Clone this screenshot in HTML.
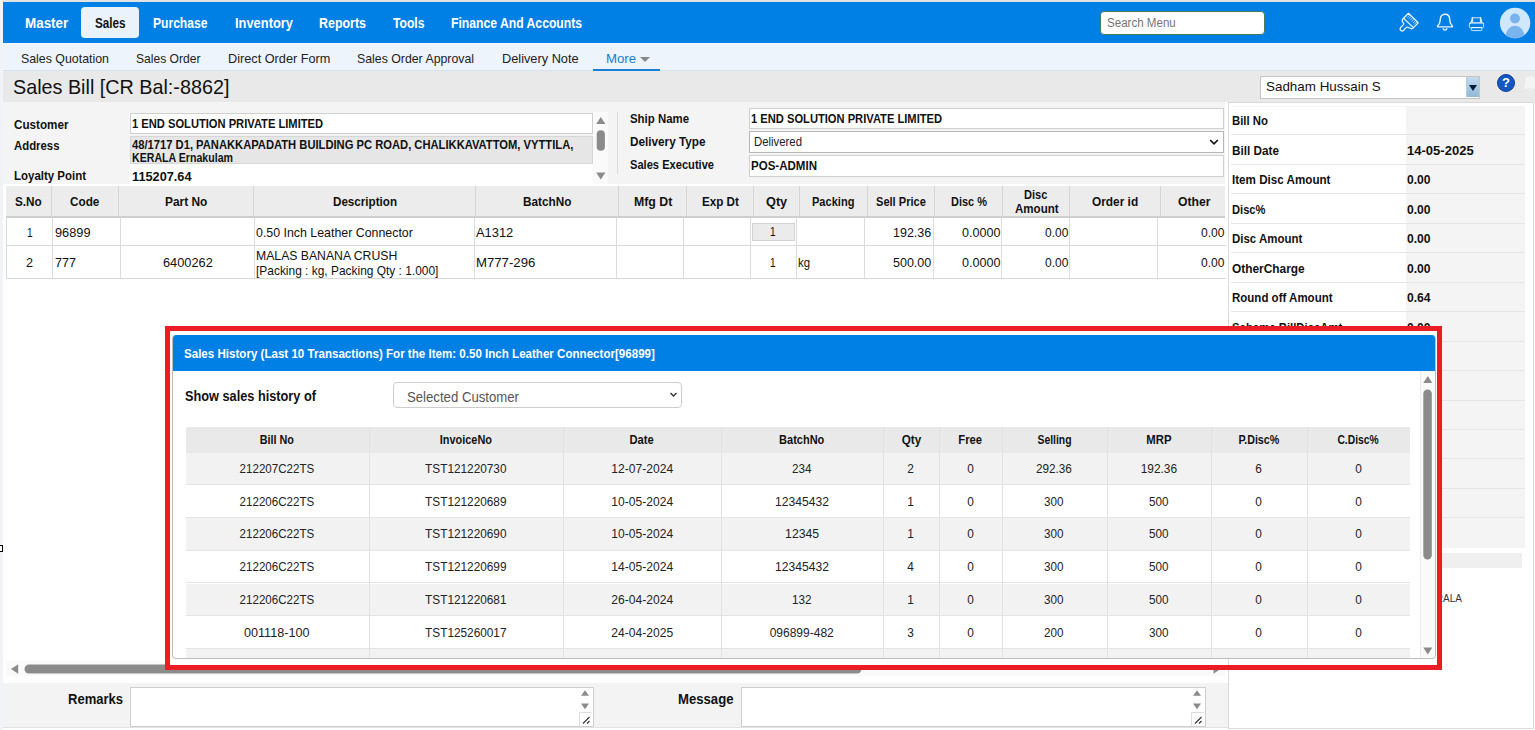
<!DOCTYPE html>
<html lang="en"><head>
<meta charset="utf-8">
<title>Sales Bill</title>
<style>
*{box-sizing:border-box;margin:0;padding:0}
html,body{width:1535px;height:730px;overflow:hidden;background:#fff}
body{position:relative;font-family:"Liberation Sans",sans-serif;color:#111;font-size:13px}
.abs{position:absolute}
.t{position:absolute;white-space:nowrap;line-height:20px;height:20px;margin-top:-10px}
.b{font-weight:bold}
#edgeL{left:0;top:0;width:3px;height:730px;background:#f1f3f9;z-index:50}
#edgeT{left:3px;top:0;width:1532px;height:2px;background:#e3e3e3;z-index:50}
/* top nav */
#nav{left:0;top:2px;width:1535px;height:41px;background:#0080e5}
#nav .mi{position:absolute;top:0;height:41px;line-height:43px;color:#fff;font-weight:bold;font-size:14px;white-space:nowrap}
#nav .pill{position:absolute;left:81px;top:5px;width:58px;height:31px;background:#eaf3fc;border-radius:4px}
#nav .mi.on{color:#111}
#search{position:absolute;left:1100px;top:8.6px;width:164.5px;height:24.4px;background:#fff;border:1px solid #4a7a5a;border-radius:4px;color:#757575;font-size:12.5px;line-height:22px;padding-left:5.5px}
/* sub nav */
#sub{left:0;top:43px;width:1535px;height:28px;background:#edf4fb;border-bottom:1px solid #d5e3f0;border-top:1px solid #f6fafe}
#sub .si{position:absolute;top:-1px;height:28px;line-height:32px;font-size:13px;color:#222;white-space:nowrap}
#sub .more{color:#1a7fd6}
#sub .ul{position:absolute;left:593px;top:25px;width:67px;height:2px;background:#1a7fd6}
#sub .caret{position:absolute;left:640px;top:13px;width:0;height:0;border-left:5px solid transparent;border-right:5px solid transparent;border-top:5px solid #888}
/* title bar */
#title{left:0;top:71px;width:1535px;height:31px;background:#e9e9e9}
#title h1{position:absolute;left:13px;top:0;height:31px;line-height:31px;font-size:21px;font-weight:normal;color:#111;white-space:nowrap}
#usersel{position:absolute;left:1260px;top:5px;width:220px;height:22.5px;background:#fff;border:1px solid #c5c5c5;font-size:13.5px;line-height:20px;padding-left:5px;color:#111}
#usersel b{position:absolute;right:0;top:0;width:13px;height:20px;background:linear-gradient(#c3dbee,#8fb8d8);border-left:1px solid #b5cde0}
#usersel b:after{content:"";position:absolute;left:2px;top:8px;border-left:4px solid transparent;border-right:4px solid transparent;border-top:6px solid #0a1a3a}
#help{position:absolute;left:1497px;top:3px;width:18px;height:18px;border-radius:50%;background:#1557c0;border:1px solid #0d3f93;color:#fff;font-weight:bold;font-size:13px;line-height:16px;text-align:center}

/* form */
#form{left:0;top:102px;width:1225px;height:82px;background:#f4f4f4}
.inp{position:absolute;background:#fff;border:1px solid #d0d0d0}
.f13{font-size:13px}
/* grid */
table{border-collapse:collapse;table-layout:fixed}
#gh{left:6px;top:186px;width:1219px;height:32px;background:#ececec;border-bottom:2px solid #cfcfcf}
#gh .c{position:absolute;top:0;height:30px;border-left:1px solid #d6d6d6}
#gb .c{position:absolute;border-left:1px solid #dcdcdc}
#gb{left:6px;top:218px;width:1219px;height:61px;border-left:1px solid #dcdcdc}
#gb .r{position:absolute;left:0;width:1219px;border-bottom:1px solid #d8d8d8}

/* right panel */
#rp{left:1228px;top:102px;width:305.5px;height:626.5px;background:#fff;border:1px solid #dadada}
#rpv{left:1231px;top:105.5px;width:293.5px;height:442px;background:#f4f4f4}
#rpl{left:1231px;top:107px;width:175px;height:440.5px;background:#fff}
.rs{position:absolute;left:1231px;width:293.5px;height:1px;background:#e6e6e6}
/* bottom */
#hs{left:6px;top:661px;width:1219px;height:15px;background:#fafafa}
#bot{left:3px;top:683px;width:1225px;height:45px;background:#f3f3f3;border-bottom:1px solid #e2e2e2}
.ta{position:absolute;background:#fff;border:1px solid #cfcfcf}
/* modal */
#red{left:165px;top:326px;width:1277px;height:344px;border:5px solid #ec1c24;background:#fff;z-index:20}
#md{left:172px;top:334.5px;width:1264px;height:324.5px;background:#fff;border:1px solid #bdbdbd;border-top:none;border-radius:4px;z-index:21;overflow:hidden}
#mh{position:absolute;left:0;top:0;width:1264px;height:36px;background:#0080e5}
#md .t{z-index:22}
#msel{position:absolute;left:219.5px;top:47.6px;width:289px;height:26px;border:1px solid #cdcdcd;border-radius:4px;background:#fff}
#mt{position:absolute;left:12.5px;top:92.5px;width:1224px;height:240px}
#mt .hr{position:absolute;left:0;top:0;width:1224px;height:25.7px;background:#e9e9e9}
#mt .r{position:absolute;left:0;width:1224px;height:32.7px;border-bottom:1px solid #e4e4e4}
#mt .r.o{background:#f2f2f2}
#mt .c{position:absolute;top:0;width:1px;height:240px;background:#e2e2e2}
.cc{position:absolute;text-align:center;white-space:nowrap;line-height:20px;height:20px;margin-top:-10px}
#msb{position:absolute;left:1247px;top:36px;width:16px;height:288px;background:#fafafa;border-left:1px solid #ececec}
/*CSS4*/
</style>
</head>
<body>
<div id="edgeL" class="abs"></div>
<div id="edgeT" class="abs"></div>
<div class="abs" style="left:-4px;top:545px;width:7px;height:7px;border:1px solid #000;background:#fff;z-index:60"></div>

<div id="nav" class="abs">
  <div class="pill"></div>
  <span class="mi" style="left: 25px; display: block; transform: scaleX(0.959); transform-origin: left center;">Master</span>
  <span class="mi on" style="left: 95px; display: block; transform: scaleX(0.836); transform-origin: left center;">Sales</span>
  <span class="mi" style="left: 153px; display: block; transform: scaleX(0.863); transform-origin: left center;">Purchase</span>
  <span class="mi" style="left: 234.5px; display: block; transform: scaleX(0.92); transform-origin: left center;">Inventory</span>
  <span class="mi" style="left: 319px; display: block; transform: scaleX(0.888); transform-origin: left center;">Reports</span>
  <span class="mi" style="left: 392.5px; display: block; transform: scaleX(0.868); transform-origin: left center;">Tools</span>
  <span class="mi" style="left: 451px; display: block; transform: scaleX(0.87); transform-origin: left center;">Finance And Accounts</span>
  <div id="search"><span style="display: inline-block; transform: scaleX(0.925); transform-origin: left center;">Search Menu</span></div>
  <svg class="abs" style="left:1395px;top:0" width="140" height="41" viewBox="1395 2 140 41" fill="none" stroke="#fff" stroke-width="1.25" stroke-linejoin="round" stroke-linecap="round">
<path d="M1408.4 13.3 L1418.2 22.8 L1413.3 27.9 Q1412 29.2 1410.6 28.5 L1408.2 27.3 Q1406.9 26.7 1406 27.7 L1403.7 30.3 A2.1 2.1 0 0 1 1400.5 27.6 L1403.3 24.9 Q1404.2 24 1403.5 23.1 Q1401.5 21 1402.6 19.3 Z" stroke-opacity=".92"></path>
<path d="M1403.8 18.5 L1413.4 27.5" stroke-opacity=".85"></path>
<path d="M1409.4 15.4 L1407.5 17.3 M1410.8 16.8 L1408.9 18.7 M1412.2 18.2 L1410.3 20.1 M1413.7 19.6 L1411.8 21.5 M1415.1 20.9 L1413.2 22.9 M1416.4 22.2 L1414.5 24.1" stroke-width=".9" stroke-opacity=".75"></path>
<path d="M1438.3 26.9 Q1437 26.9 1437.8 25.8 C1439.7 23.6 1440.3 22.5 1440.3 19.4 C1440.3 16 1442.4 14.2 1445 14.2 C1447.6 14.2 1449.7 16 1449.7 19.4 C1449.7 22.5 1450.3 23.6 1452.2 25.8 Q1453 26.9 1451.7 26.9 Z" stroke-width="1.4" stroke-opacity=".92"></path>
<path d="M1443.2 28.7 A1.9 1.9 0 0 0 1446.8 28.7" stroke-width="1.3" stroke-opacity=".9"></path>
<g stroke-width="1" stroke-opacity=".8">
<path d="M1471.9 17.3 H1473.1 V22.2 H1470.6 Z M1481.1 17.3 H1479.9 V22.2 H1482.4 Z" fill="#fff" fill-opacity=".85" stroke="none"></path>
<path d="M1472.2 17.8 H1480.8"></path>
<rect x="1469.3" y="22.7" width="14.3" height="5" rx="1.2"></rect>
<path d="M1469.8 23.3 H1483.1" stroke-opacity=".55"></path>
<rect x="1471.2" y="27.5" width="10.7" height="3.1" rx="1.2"></rect>
</g>
<circle cx="1515.1" cy="23" r="15.2" fill="#d0e8fd" stroke="none"></circle>
<clipPath id="av"><circle cx="1515.1" cy="23" r="15.2"></circle></clipPath>
<g clip-path="url(#av)" fill="#7ab4ee" stroke="none"><circle cx="1515" cy="18.5" r="4.95"></circle><ellipse cx="1515" cy="37.5" rx="9.7" ry="11.7"></ellipse></g>
</svg>
</div>

<div id="sub" class="abs">
  <span class="si" style="left: 21px; display: block; transform: scaleX(0.951); transform-origin: left center;">Sales Quotation</span>
  <span class="si" style="left: 135.5px; display: block; transform: scaleX(0.93); transform-origin: left center;">Sales Order</span>
  <span class="si" style="left: 228px; display: block; transform: scaleX(0.978); transform-origin: left center;">Direct Order Form</span>
  <span class="si" style="left: 357px; display: block; transform: scaleX(0.947); transform-origin: left center;">Sales Order Approval</span>
  <span class="si" style="left: 502.4px; display: block; transform: scaleX(0.982); transform-origin: left center;">Delivery Note</span>
  <span class="si more" style="left: 606.4px; display: block; transform: scaleX(1.013); transform-origin: left center;">More</span>
  <div class="caret"></div>
  <div class="ul"></div>
</div>

<div id="title" class="abs">
  <h1 style="display: block; transform: scaleX(0.941); transform-origin: left center;">Sales Bill [CR Bal:-8862]</h1>
  <div id="usersel"><span style="display: inline-block; transform: scaleX(0.993); transform-origin: left center;">Sadham Hussain S</span><b></b></div>
  <div id="help">?</div>
  <svg class="abs" style="left:1522px;top:4px" width="13" height="18" viewBox="0 0 13 18"><path d="M1 13.5 C3 12 3 9 3.2 6.5 C3.6 2.5 6 1 8.5 1 C11 1 13 2.5 13 6 V13.5 Z M7 15 A1.6 1.6 0 0 0 10 15Z" fill="#f4f4f4"></path></svg>
</div>


<div id="form" class="abs"></div>
<div class="inp" style="left:130px;top:113px;width:463px;height:21px"></div>
<div class="abs" style="left:130px;top:136px;width:463px;height:28px;background:#e6e6e6;border:1px solid #d6d6d6"></div>
<div class="abs" style="left:130px;top:164px;width:478px;height:20px;background:#fff"></div>
<div class="abs" style="left:593px;top:112px;width:15px;height:72px;background:#fafafa"></div>
<svg class="abs" style="left:593px;top:113px" width="15" height="71" viewBox="0 0 15 71"><path d="M3.2 11 L7.8 4 L12.4 11Z M3.2 59.5 L7.8 66.5 L12.4 59.5Z" fill="#8b8b8b"></path><rect x="3.7" y="17.2" width="8.2" height="20.6" rx="4.1" fill="#8b8b8b"></rect></svg>
<div class="abs" style="left:617px;top:112px;width:1px;height:62px;background:#dcdcdc"></div>
<span class="t b f13" style="left: 13.5px; top: 124.5px; display: block; transform: scaleX(0.898); transform-origin: left center;">Customer</span>
<span class="t b f13" style="left: 13.5px; top: 146px; display: block; transform: scaleX(0.874); transform-origin: left center;">Address</span>
<span class="t b f13" style="left: 13.5px; top: 176px; display: block; transform: scaleX(0.882); transform-origin: left center;">Loyalty Point</span>
<span class="t b f13" style="left: 131.5px; top: 124px; display: block; transform: scaleX(0.858); transform-origin: left center;">1 END SOLUTION PRIVATE LIMITED</span>
<span class="t b f13" style="left: 131.5px; top: 144.5px; display: block; transform: scaleX(0.861); transform-origin: left center;">48/1717 D1, PANAKKAPADATH BUILDING PC ROAD, CHALIKKAVATTOM, VYTTILA,</span>
<span class="t b f13" style="left: 131.5px; top: 157.5px; display: block; transform: scaleX(0.816); transform-origin: left center;">KERALA Ernakulam</span>
<span class="t b f13" style="left: 131.5px; top: 176.5px; display: block; transform: scaleX(0.98); transform-origin: left center;">115207.64</span>
<span class="t b f13" style="left: 630px; top: 118.5px; display: block; transform: scaleX(0.878); transform-origin: left center;">Ship Name</span>
<span class="t b f13" style="left: 630px; top: 141.5px; display: block; transform: scaleX(0.903); transform-origin: left center;">Delivery Type</span>
<span class="t b f13" style="left: 630px; top: 165px; display: block; transform: scaleX(0.855); transform-origin: left center;">Sales Executive</span>
<div class="inp" style="left:749px;top:108px;width:475px;height:21px"></div>
<div class="inp" style="left:749px;top:131px;width:475px;height:22px;border-color:#b8b8b8"></div>
<div class="inp" style="left:749px;top:155px;width:475px;height:22px"></div>
<span class="t b f13" style="left: 750.5px; top: 119px; display: block; transform: scaleX(0.858); transform-origin: left center;">1 END SOLUTION PRIVATE LIMITED</span>
<span class="t" style="left: 754px; top: 142px; font-size: 12.5px; color: rgb(34, 34, 34); display: block; transform: scaleX(0.909); transform-origin: left center;">Delivered</span>
<svg class="abs" style="left:1209px;top:138px" width="10" height="8" viewBox="0 0 10 8"><path d="M1.2 2 L5 5.8 L8.8 2" fill="none" stroke="#111" stroke-width="1.7"></path></svg>
<span class="t b f13" style="left: 750.5px; top: 166px; display: block; transform: scaleX(0.887); transform-origin: left center;">POS-ADMIN</span>

<div id="gh" class="abs">
<div class="c" style="left:45px"></div>
<div class="c" style="left:112px"></div>
<div class="c" style="left:247px"></div>
<div class="c" style="left:469px"></div>
<div class="c" style="left:612px"></div>
<div class="c" style="left:680px"></div>
<div class="c" style="left:747px"></div>
<div class="c" style="left:793px"></div>
<div class="c" style="left:861px"></div>
<div class="c" style="left:928px"></div>
<div class="c" style="left:996px"></div>
<div class="c" style="left:1063px"></div>
<div class="c" style="left:1154px"></div>
</div>
<span class="t b f13" style="left: 15.2px; top: 201.5px; display: block; transform: scaleX(0.905); transform-origin: left center;">S.No</span>
<span class="t b f13" style="left: 70.3px; top: 201.5px; display: block; transform: scaleX(0.902); transform-origin: left center;">Code</span>
<span class="t b f13" style="left: 164.6px; top: 201.5px; display: block; transform: scaleX(0.917); transform-origin: left center;">Part No</span>
<span class="t b f13" style="left: 332.5px; top: 201.5px; display: block; transform: scaleX(0.895); transform-origin: left center;">Description</span>
<span class="t b f13" style="left: 522.9px; top: 201.5px; display: block; transform: scaleX(0.905); transform-origin: left center;">BatchNo</span>
<span class="t b f13" style="left: 633.6px; top: 201.5px; display: block; transform: scaleX(0.947); transform-origin: left center;">Mfg Dt</span>
<span class="t b f13" style="left: 701.7px; top: 201.5px; display: block; transform: scaleX(0.896); transform-origin: left center;">Exp Dt</span>
<span class="t b f13" style="left: 766px; top: 201.5px; display: block; transform: scaleX(0.978); transform-origin: left center;">Qty</span>
<span class="t b f13" style="left: 812.3px; top: 201.5px; display: block; transform: scaleX(0.85); transform-origin: left center;">Packing</span>
<span class="t b f13" style="left: 875.8px; top: 201.5px; display: block; transform: scaleX(0.852); transform-origin: left center;">Sell Price</span>
<span class="t b f13" style="left: 950.7px; top: 201.5px; display: block; transform: scaleX(0.842); transform-origin: left center;">Disc %</span>
<span class="t b f13" style="left: 1091.8px; top: 201.5px; display: block; transform: scaleX(0.913); transform-origin: left center;">Order id</span>
<span class="t b f13" style="left: 1177.5px; top: 201.5px; display: block; transform: scaleX(0.937); transform-origin: left center;">Other</span>
<span class="t b f13" style="left: 1024.4px; top: 194.5px; display: block; transform: scaleX(0.852); transform-origin: left center;">Disc</span>
<span class="t b f13" style="left: 1014.6px; top: 209px; display: block; transform: scaleX(0.888); transform-origin: left center;">Amount</span>
<div id="gb" class="abs"><div class="r" style="top:0;height:27.5px"></div><div class="r" style="top:27.5px;height:33px"></div>
<div class="c" style="left:45px;top:0;height:60px"></div>
<div class="c" style="left:113px;top:0;height:60px"></div>
<div class="c" style="left:247px;top:0;height:60px"></div>
<div class="c" style="left:467px;top:0;height:60px"></div>
<div class="c" style="left:609px;top:0;height:60px"></div>
<div class="c" style="left:676px;top:0;height:60px"></div>
<div class="c" style="left:743px;top:0;height:60px"></div>
<div class="c" style="left:789px;top:0;height:60px"></div>
<div class="c" style="left:857px;top:0;height:60px"></div>
<div class="c" style="left:926px;top:0;height:60px"></div>
<div class="c" style="left:994px;top:0;height:60px"></div>
<div class="c" style="left:1062px;top:0;height:60px"></div>
<div class="c" style="left:1150px;top:0;height:60px"></div>
</div>
<div class="abs" style="left:752px;top:223px;width:43px;height:18px;background:#ebebeb;border:1px solid #d2d2d2"></div>
<span class="t f13" style="left: 26.7px; top: 233.3px; display: block; transform: scaleX(0.774); transform-origin: left center;">1</span>
<span class="t f13" style="left: 54.5px; top: 233.3px; display: block; transform: scaleX(0.982); transform-origin: left center;">96899</span>
<span class="t f13" style="left: 256.3px; top: 233.3px; display: block; transform: scaleX(0.952); transform-origin: left center;">0.50 Inch Leather Connector</span>
<span class="t f13" style="left: 476.4px; top: 233.3px; display: block; transform: scaleX(0.992); transform-origin: left center;">A1312</span>
<span class="t f13" style="left: 770px; top: 232.3px; display: block; transform: scaleX(0.774); transform-origin: left center;">1</span>
<span class="t f13" style="left: 893px; top: 233.3px; display: block; transform: scaleX(0.961); transform-origin: left center;">192.36</span>
<span class="t f13" style="left: 961.5px; top: 233.3px; display: block; transform: scaleX(0.968); transform-origin: left center;">0.0000</span>
<span class="t f13" style="left: 1044.6px; top: 233.3px; display: block; transform: scaleX(0.924); transform-origin: left center;">0.00</span>
<span class="t f13" style="left: 1201px; top: 233.3px; display: block; transform: scaleX(0.928); transform-origin: left center;">0.00</span>
<span class="t f13" style="left: 26px; top: 263.4px; display: block; transform: scaleX(0.968); transform-origin: left center;">2</span>
<span class="t f13" style="left: 54.5px; top: 263.4px; display: block; transform: scaleX(0.963); transform-origin: left center;">777</span>
<span class="t f13" style="left: 163.2px; top: 263.4px; display: block; transform: scaleX(0.984); transform-origin: left center;">6400262</span>
<span class="t f13" style="left: 256.3px; top: 256px; display: block; transform: scaleX(0.94); transform-origin: left center;">MALAS BANANA CRUSH</span>
<span class="t f13" style="left: 256.3px; top: 271px; display: block; transform: scaleX(0.918); transform-origin: left center;">[Packing : kg, Packing Qty : 1.000]</span>
<span class="t f13" style="left: 476.4px; top: 263.4px; display: block; transform: scaleX(1.013); transform-origin: left center;">M777-296</span>
<span class="t f13" style="left: 770px; top: 263.4px; display: block; transform: scaleX(0.774); transform-origin: left center;">1</span>
<span class="t f13" style="left: 798px; top: 263.4px; display: block; transform: scaleX(0.874); transform-origin: left center;">kg</span>
<span class="t f13" style="left: 893px; top: 263.4px; display: block; transform: scaleX(0.961); transform-origin: left center;">500.00</span>
<span class="t f13" style="left: 961.5px; top: 263.4px; display: block; transform: scaleX(0.968); transform-origin: left center;">0.0000</span>
<span class="t f13" style="left: 1044.6px; top: 263.4px; display: block; transform: scaleX(0.924); transform-origin: left center;">0.00</span>
<span class="t f13" style="left: 1201px; top: 263.4px; display: block; transform: scaleX(0.928); transform-origin: left center;">0.00</span>
<div id="rp" class="abs"></div><div id="rpv" class="abs"></div><div id="rpl" class="abs"></div>
<div class="rs" style="top:134.4px"></div>
<div class="rs" style="top:163.9px"></div>
<div class="rs" style="top:193.3px"></div>
<div class="rs" style="top:222.8px"></div>
<div class="rs" style="top:252.2px"></div>
<div class="rs" style="top:281.7px"></div>
<div class="rs" style="top:311.1px"></div>
<div class="rs" style="top:340.6px"></div>
<div class="rs" style="top:370.1px"></div>
<div class="rs" style="top:399.5px"></div>
<div class="rs" style="top:428.9px"></div>
<div class="rs" style="top:458.4px"></div>
<div class="rs" style="top:487.8px"></div>
<div class="rs" style="top:517.3px"></div>
<span class="t b f13" style="left: 1232px; top: 121px; display: block; transform: scaleX(0.874); transform-origin: left center;">Bill No</span>
<span class="t b f13" style="left: 1232px; top: 150.5px; display: block; transform: scaleX(0.904); transform-origin: left center;">Bill Date</span>
<span class="t b f13" style="left: 1407.4px; top: 150.5px; display: block; transform: scaleX(1.002); transform-origin: left center;">14-05-2025</span>
<span class="t b f13" style="left: 1232px; top: 180px; display: block; transform: scaleX(0.895); transform-origin: left center;">Item Disc Amount</span>
<span class="t b f13" style="left: 1407.4px; top: 180px; display: block; transform: scaleX(0.932); transform-origin: left center;">0.00</span>
<span class="t b f13" style="left: 1232px; top: 209.5px; display: block; transform: scaleX(0.856); transform-origin: left center;">Disc%</span>
<span class="t b f13" style="left: 1407.4px; top: 209.5px; display: block; transform: scaleX(0.932); transform-origin: left center;">0.00</span>
<span class="t b f13" style="left: 1232px; top: 239px; display: block; transform: scaleX(0.882); transform-origin: left center;">Disc Amount</span>
<span class="t b f13" style="left: 1407.4px; top: 239px; display: block; transform: scaleX(0.932); transform-origin: left center;">0.00</span>
<span class="t b f13" style="left: 1232px; top: 268.5px; display: block; transform: scaleX(0.915); transform-origin: left center;">OtherCharge</span>
<span class="t b f13" style="left: 1407.4px; top: 268.5px; display: block; transform: scaleX(0.932); transform-origin: left center;">0.00</span>
<span class="t b f13" style="left: 1232px; top: 298px; display: block; transform: scaleX(0.885); transform-origin: left center;">Round off Amount</span>
<span class="t b f13" style="left: 1407.4px; top: 298px; display: block; transform: scaleX(0.932); transform-origin: left center;">0.64</span>
<span class="t b f13" style="left: 1232px; top: 327.5px; display: block; transform: scaleX(0.873); transform-origin: left center;">Scheme BillDiscAmt</span>
<span class="t b f13" style="left: 1407.4px; top: 327.5px; display: block; transform: scaleX(0.932); transform-origin: left center;">0.00</span>
<div class="abs" style="left:1236px;top:553px;width:286px;height:15px;background:#efefef"></div>
<span class="t" style="left:1422.5px;top:598.5px;font-size:10px;color:#333">KERALA</span>
<div id="hs" class="abs"></div>
<svg class="abs" style="left:6px;top:661px" width="1219" height="15" viewBox="0 0 1219 15"><path d="M12.2 3.2 L12.2 12.8 L5 8Z M1207.5 3.2 L1207.5 12.8 L1214.5 8Z" fill="#8b8b8b"></path><rect x="18.5" y="3.5" width="837" height="9" rx="4.5" fill="#8b8b8b"></rect></svg>
<div id="bot" class="abs"></div>
<div class="ta" style="left:129.5px;top:686.5px;width:464.5px;height:40px"></div>
<div class="ta" style="left:741px;top:686.5px;width:464.5px;height:40px"></div>
<span class="t b" style="left: 67.5px; top: 699px; font-size: 15px; display: block; transform: scaleX(0.868); transform-origin: left center;">Remarks</span>
<span class="t b" style="left: 677.6px; top: 699px; font-size: 15px; display: block; transform: scaleX(0.876); transform-origin: left center;">Message</span>
<svg class="abs" style="left:578px;top:687.5px" width="14" height="38" viewBox="0 0 14 38"><path d="M3 7.8 L7 2.2 L11 7.8Z M3 15.6 L7 21.2 L11 15.6Z" fill="#8b8b8b"></path><path d="M1.5 24.5 H13.5 M1.5 24.5 V38" stroke="#ddd" fill="none"></path><path d="M5 35.5 L11.5 29 M9 35.5 L11.5 33" stroke="#333" stroke-width="1.1" fill="none"></path></svg>
<svg class="abs" style="left:1189.5px;top:687.5px" width="14" height="38" viewBox="0 0 14 38"><path d="M3 7.8 L7 2.2 L11 7.8Z M3 15.6 L7 21.2 L11 15.6Z" fill="#8b8b8b"></path><path d="M1.5 24.5 H13.5 M1.5 24.5 V38" stroke="#ddd" fill="none"></path><path d="M5 35.5 L11.5 29 M9 35.5 L11.5 33" stroke="#333" stroke-width="1.1" fill="none"></path></svg>
<div id="red" class="abs"></div><div class="abs" style="left:1228px;top:659px;width:1px;height:6px;background:#dadada;z-index:25"></div>
<div id="md" class="abs">
<div id="mh"></div>
<div id="msel"></div>
<div id="mt"><div class="hr"></div>
<div class="r o" style="top:25.7px"></div>
<div class="r" style="top:58.4px"></div>
<div class="r o" style="top:91.1px"></div>
<div class="r" style="top:123.8px"></div>
<div class="r o" style="top:156.5px"></div>
<div class="r" style="top:189.2px"></div>
<div class="r o" style="top:221.9px"></div>
<div class="c" style="left:183.0px"></div>
<div class="c" style="left:377.5px"></div>
<div class="c" style="left:535.0px"></div>
<div class="c" style="left:697.5px"></div>
<div class="c" style="left:753.5px"></div>
<div class="c" style="left:816.0px"></div>
<div class="c" style="left:921.5px"></div>
<div class="c" style="left:1025.0px"></div>
<div class="c" style="left:1121.5px"></div>
</div>
<div id="msb"><svg width="15" height="288" viewBox="1.2 0 15 288"><path d="M3.5 12 L8 5 L12.5 12Z M3.5 276.5 L8 283.5 L12.5 276.5Z" fill="#8b8b8b"></path><rect x="3.5" y="18.5" width="8.5" height="170" rx="4.2" fill="#8b8b8b"></rect></svg></div>
</div>
<span class="t b" style="left: 184px; top: 353.5px; font-size: 12.5px; color: rgb(255, 255, 255); z-index: 22; display: block; transform: scaleX(0.926); transform-origin: left center;">Sales History (Last 10 Transactions) For the Item: 0.50 Inch Leather Connector[96899]</span>
<span class="t b" style="left: 185px; top: 396px; font-size: 15px; z-index: 22; display: block; transform: scaleX(0.849); transform-origin: left center;">Show sales history of</span>
<span class="t" style="left: 407.4px; top: 397px; font-size: 14.5px; color: rgb(85, 85, 85); z-index: 22; display: block; transform: scaleX(0.908); transform-origin: left center;">Selected Customer</span>
<svg class="abs" style="left:669px;top:391px;z-index:22" width="9" height="7" viewBox="0 0 9 7"><path d="M1.5 2 L4.5 5 L7.5 2" fill="none" stroke="#333" stroke-width="1.4"></path></svg>
<div class="cc b" style="left:185.5px;width:183.0px;top:440.0px;font-size:12.5px;color:#111;z-index:22"><span style="display: inline-block; transform: scaleX(0.866); transform-origin: center center;">Bill No</span></div>
<div class="cc b" style="left:368.5px;width:194.5px;top:440.0px;font-size:12.5px;color:#111;z-index:22"><span style="display: inline-block; transform: scaleX(0.874); transform-origin: center center;">InvoiceNo</span></div>
<div class="cc b" style="left:563px;width:157.5px;top:440.0px;font-size:12.5px;color:#111;z-index:22"><span style="display: inline-block; transform: scaleX(0.893); transform-origin: center center;">Date</span></div>
<div class="cc b" style="left:720.5px;width:162.5px;top:440.0px;font-size:12.5px;color:#111;z-index:22"><span style="display: inline-block; transform: scaleX(0.881); transform-origin: center center;">BatchNo</span></div>
<div class="cc b" style="left:883px;width:56px;top:440.0px;font-size:12.5px;color:#111;z-index:22"><span style="display: inline-block; transform: scaleX(0.931); transform-origin: center center;">Qty</span></div>
<div class="cc b" style="left:939px;width:62.5px;top:440.0px;font-size:12.5px;color:#111;z-index:22"><span style="display: inline-block; transform: scaleX(0.901); transform-origin: center center;">Free</span></div>
<div class="cc b" style="left:1001.5px;width:105.5px;top:440.0px;font-size:12.5px;color:#111;z-index:22"><span style="display: inline-block; transform: scaleX(0.83); transform-origin: center center;">Selling</span></div>
<div class="cc b" style="left:1107px;width:103.5px;top:440.0px;font-size:12.5px;color:#111;z-index:22"><span style="display: inline-block; transform: scaleX(0.907); transform-origin: center center;">MRP</span></div>
<div class="cc b" style="left:1210.5px;width:96.5px;top:440.0px;font-size:12.5px;color:#111;z-index:22"><span style="display: inline-block; transform: scaleX(0.855); transform-origin: center center;">P.Disc%</span></div>
<div class="cc b" style="left:1307px;width:102.5px;top:440.0px;font-size:12.5px;color:#111;z-index:22"><span style="display: inline-block; transform: scaleX(0.823); transform-origin: center center;">C.Disc%</span></div>
<div class="cc" style="left:185.5px;width:183.0px;top:469.0px;font-size:13px;color:#222;z-index:22"><span style="display: inline-block; transform: scaleX(0.89); transform-origin: center center;">212207C22TS</span></div>
<div class="cc" style="left:368.5px;width:194.5px;top:469.0px;font-size:13px;color:#222;z-index:22"><span style="display: inline-block; transform: scaleX(0.908); transform-origin: center center;">TST121220730</span></div>
<div class="cc" style="left:563px;width:157.5px;top:469.0px;font-size:13px;color:#222;z-index:22"><span style="display: inline-block; transform: scaleX(0.929); transform-origin: center center;">12-07-2024</span></div>
<div class="cc" style="left:720.5px;width:162.5px;top:469.0px;font-size:13px;color:#222;z-index:22"><span style="display: inline-block; transform: scaleX(0.898); transform-origin: center center;">234</span></div>
<div class="cc" style="left:883px;width:56px;top:469.0px;font-size:13px;color:#222;z-index:22"><span style="display: inline-block; transform: scaleX(0.912); transform-origin: center center;">2</span></div>
<div class="cc" style="left:939px;width:62.5px;top:469.0px;font-size:13px;color:#222;z-index:22"><span style="display: inline-block; transform: scaleX(0.912); transform-origin: center center;">0</span></div>
<div class="cc" style="left:1001.5px;width:105.5px;top:469.0px;font-size:13px;color:#222;z-index:22"><span style="display: inline-block; transform: scaleX(0.903); transform-origin: center center;">292.36</span></div>
<div class="cc" style="left:1107px;width:103.5px;top:469.0px;font-size:13px;color:#222;z-index:22"><span style="display: inline-block; transform: scaleX(0.915); transform-origin: center center;">192.36</span></div>
<div class="cc" style="left:1210.5px;width:96.5px;top:469.0px;font-size:13px;color:#222;z-index:22"><span style="display: inline-block; transform: scaleX(0.912); transform-origin: center center;">6</span></div>
<div class="cc" style="left:1307px;width:102.5px;top:469.0px;font-size:13px;color:#222;z-index:22"><span style="display: inline-block; transform: scaleX(0.912); transform-origin: center center;">0</span></div>
<div class="cc" style="left:185.5px;width:183.0px;top:501.7px;font-size:13px;color:#222;z-index:22"><span style="display: inline-block; transform: scaleX(0.89); transform-origin: center center;">212206C22TS</span></div>
<div class="cc" style="left:368.5px;width:194.5px;top:501.7px;font-size:13px;color:#222;z-index:22"><span style="display: inline-block; transform: scaleX(0.908); transform-origin: center center;">TST121220689</span></div>
<div class="cc" style="left:563px;width:157.5px;top:501.7px;font-size:13px;color:#222;z-index:22"><span style="display: inline-block; transform: scaleX(0.929); transform-origin: center center;">10-05-2024</span></div>
<div class="cc" style="left:720.5px;width:162.5px;top:501.7px;font-size:13px;color:#222;z-index:22"><span style="display: inline-block; transform: scaleX(0.932); transform-origin: center center;">12345432</span></div>
<div class="cc" style="left:883px;width:56px;top:501.7px;font-size:13px;color:#222;z-index:22"><span style="display: inline-block; transform: scaleX(0.912); transform-origin: center center;">1</span></div>
<div class="cc" style="left:939px;width:62.5px;top:501.7px;font-size:13px;color:#222;z-index:22"><span style="display: inline-block; transform: scaleX(0.912); transform-origin: center center;">0</span></div>
<div class="cc" style="left:1001.5px;width:105.5px;top:501.7px;font-size:13px;color:#222;z-index:22"><span style="display: inline-block; transform: scaleX(0.898); transform-origin: center center;">300</span></div>
<div class="cc" style="left:1107px;width:103.5px;top:501.7px;font-size:13px;color:#222;z-index:22"><span style="display: inline-block; transform: scaleX(0.898); transform-origin: center center;">500</span></div>
<div class="cc" style="left:1210.5px;width:96.5px;top:501.7px;font-size:13px;color:#222;z-index:22"><span style="display: inline-block; transform: scaleX(0.912); transform-origin: center center;">0</span></div>
<div class="cc" style="left:1307px;width:102.5px;top:501.7px;font-size:13px;color:#222;z-index:22"><span style="display: inline-block; transform: scaleX(0.912); transform-origin: center center;">0</span></div>
<div class="cc" style="left:185.5px;width:183.0px;top:534.4px;font-size:13px;color:#222;z-index:22"><span style="display: inline-block; transform: scaleX(0.89); transform-origin: center center;">212206C22TS</span></div>
<div class="cc" style="left:368.5px;width:194.5px;top:534.4px;font-size:13px;color:#222;z-index:22"><span style="display: inline-block; transform: scaleX(0.908); transform-origin: center center;">TST121220690</span></div>
<div class="cc" style="left:563px;width:157.5px;top:534.4px;font-size:13px;color:#222;z-index:22"><span style="display: inline-block; transform: scaleX(0.929); transform-origin: center center;">10-05-2024</span></div>
<div class="cc" style="left:720.5px;width:162.5px;top:534.4px;font-size:13px;color:#222;z-index:22"><span style="display: inline-block; transform: scaleX(0.94); transform-origin: center center;">12345</span></div>
<div class="cc" style="left:883px;width:56px;top:534.4px;font-size:13px;color:#222;z-index:22"><span style="display: inline-block; transform: scaleX(0.912); transform-origin: center center;">1</span></div>
<div class="cc" style="left:939px;width:62.5px;top:534.4px;font-size:13px;color:#222;z-index:22"><span style="display: inline-block; transform: scaleX(0.912); transform-origin: center center;">0</span></div>
<div class="cc" style="left:1001.5px;width:105.5px;top:534.4px;font-size:13px;color:#222;z-index:22"><span style="display: inline-block; transform: scaleX(0.898); transform-origin: center center;">300</span></div>
<div class="cc" style="left:1107px;width:103.5px;top:534.4px;font-size:13px;color:#222;z-index:22"><span style="display: inline-block; transform: scaleX(0.898); transform-origin: center center;">500</span></div>
<div class="cc" style="left:1210.5px;width:96.5px;top:534.4px;font-size:13px;color:#222;z-index:22"><span style="display: inline-block; transform: scaleX(0.912); transform-origin: center center;">0</span></div>
<div class="cc" style="left:1307px;width:102.5px;top:534.4px;font-size:13px;color:#222;z-index:22"><span style="display: inline-block; transform: scaleX(0.912); transform-origin: center center;">0</span></div>
<div class="cc" style="left:185.5px;width:183.0px;top:567.1px;font-size:13px;color:#222;z-index:22"><span style="display: inline-block; transform: scaleX(0.89); transform-origin: center center;">212206C22TS</span></div>
<div class="cc" style="left:368.5px;width:194.5px;top:567.1px;font-size:13px;color:#222;z-index:22"><span style="display: inline-block; transform: scaleX(0.908); transform-origin: center center;">TST121220699</span></div>
<div class="cc" style="left:563px;width:157.5px;top:567.1px;font-size:13px;color:#222;z-index:22"><span style="display: inline-block; transform: scaleX(0.929); transform-origin: center center;">14-05-2024</span></div>
<div class="cc" style="left:720.5px;width:162.5px;top:567.1px;font-size:13px;color:#222;z-index:22"><span style="display: inline-block; transform: scaleX(0.932); transform-origin: center center;">12345432</span></div>
<div class="cc" style="left:883px;width:56px;top:567.1px;font-size:13px;color:#222;z-index:22"><span style="display: inline-block; transform: scaleX(0.912); transform-origin: center center;">4</span></div>
<div class="cc" style="left:939px;width:62.5px;top:567.1px;font-size:13px;color:#222;z-index:22"><span style="display: inline-block; transform: scaleX(0.912); transform-origin: center center;">0</span></div>
<div class="cc" style="left:1001.5px;width:105.5px;top:567.1px;font-size:13px;color:#222;z-index:22"><span style="display: inline-block; transform: scaleX(0.898); transform-origin: center center;">300</span></div>
<div class="cc" style="left:1107px;width:103.5px;top:567.1px;font-size:13px;color:#222;z-index:22"><span style="display: inline-block; transform: scaleX(0.898); transform-origin: center center;">500</span></div>
<div class="cc" style="left:1210.5px;width:96.5px;top:567.1px;font-size:13px;color:#222;z-index:22"><span style="display: inline-block; transform: scaleX(0.912); transform-origin: center center;">0</span></div>
<div class="cc" style="left:1307px;width:102.5px;top:567.1px;font-size:13px;color:#222;z-index:22"><span style="display: inline-block; transform: scaleX(0.912); transform-origin: center center;">0</span></div>
<div class="cc" style="left:185.5px;width:183.0px;top:599.8px;font-size:13px;color:#222;z-index:22"><span style="display: inline-block; transform: scaleX(0.89); transform-origin: center center;">212206C22TS</span></div>
<div class="cc" style="left:368.5px;width:194.5px;top:599.8px;font-size:13px;color:#222;z-index:22"><span style="display: inline-block; transform: scaleX(0.908); transform-origin: center center;">TST121220681</span></div>
<div class="cc" style="left:563px;width:157.5px;top:599.8px;font-size:13px;color:#222;z-index:22"><span style="display: inline-block; transform: scaleX(0.929); transform-origin: center center;">26-04-2024</span></div>
<div class="cc" style="left:720.5px;width:162.5px;top:599.8px;font-size:13px;color:#222;z-index:22"><span style="display: inline-block; transform: scaleX(0.898); transform-origin: center center;">132</span></div>
<div class="cc" style="left:883px;width:56px;top:599.8px;font-size:13px;color:#222;z-index:22"><span style="display: inline-block; transform: scaleX(0.912); transform-origin: center center;">1</span></div>
<div class="cc" style="left:939px;width:62.5px;top:599.8px;font-size:13px;color:#222;z-index:22"><span style="display: inline-block; transform: scaleX(0.912); transform-origin: center center;">0</span></div>
<div class="cc" style="left:1001.5px;width:105.5px;top:599.8px;font-size:13px;color:#222;z-index:22"><span style="display: inline-block; transform: scaleX(0.898); transform-origin: center center;">300</span></div>
<div class="cc" style="left:1107px;width:103.5px;top:599.8px;font-size:13px;color:#222;z-index:22"><span style="display: inline-block; transform: scaleX(0.898); transform-origin: center center;">500</span></div>
<div class="cc" style="left:1210.5px;width:96.5px;top:599.8px;font-size:13px;color:#222;z-index:22"><span style="display: inline-block; transform: scaleX(0.912); transform-origin: center center;">0</span></div>
<div class="cc" style="left:1307px;width:102.5px;top:599.8px;font-size:13px;color:#222;z-index:22"><span style="display: inline-block; transform: scaleX(0.912); transform-origin: center center;">0</span></div>
<div class="cc" style="left:185.5px;width:183.0px;top:632.5px;font-size:13px;color:#222;z-index:22"><span style="display: inline-block; transform: scaleX(0.971); transform-origin: center center;">001118-100</span></div>
<div class="cc" style="left:368.5px;width:194.5px;top:632.5px;font-size:13px;color:#222;z-index:22"><span style="display: inline-block; transform: scaleX(0.908); transform-origin: center center;">TST125260017</span></div>
<div class="cc" style="left:563px;width:157.5px;top:632.5px;font-size:13px;color:#222;z-index:22"><span style="display: inline-block; transform: scaleX(0.929); transform-origin: center center;">24-04-2025</span></div>
<div class="cc" style="left:720.5px;width:162.5px;top:632.5px;font-size:13px;color:#222;z-index:22"><span style="display: inline-block; transform: scaleX(0.924); transform-origin: center center;">096899-482</span></div>
<div class="cc" style="left:883px;width:56px;top:632.5px;font-size:13px;color:#222;z-index:22"><span style="display: inline-block; transform: scaleX(0.912); transform-origin: center center;">3</span></div>
<div class="cc" style="left:939px;width:62.5px;top:632.5px;font-size:13px;color:#222;z-index:22"><span style="display: inline-block; transform: scaleX(0.912); transform-origin: center center;">0</span></div>
<div class="cc" style="left:1001.5px;width:105.5px;top:632.5px;font-size:13px;color:#222;z-index:22"><span style="display: inline-block; transform: scaleX(0.898); transform-origin: center center;">200</span></div>
<div class="cc" style="left:1107px;width:103.5px;top:632.5px;font-size:13px;color:#222;z-index:22"><span style="display: inline-block; transform: scaleX(0.898); transform-origin: center center;">300</span></div>
<div class="cc" style="left:1210.5px;width:96.5px;top:632.5px;font-size:13px;color:#222;z-index:22"><span style="display: inline-block; transform: scaleX(0.912); transform-origin: center center;">0</span></div>
<div class="cc" style="left:1307px;width:102.5px;top:632.5px;font-size:13px;color:#222;z-index:22"><span style="display: inline-block; transform: scaleX(0.912); transform-origin: center center;">0</span></div>


</body></html>
